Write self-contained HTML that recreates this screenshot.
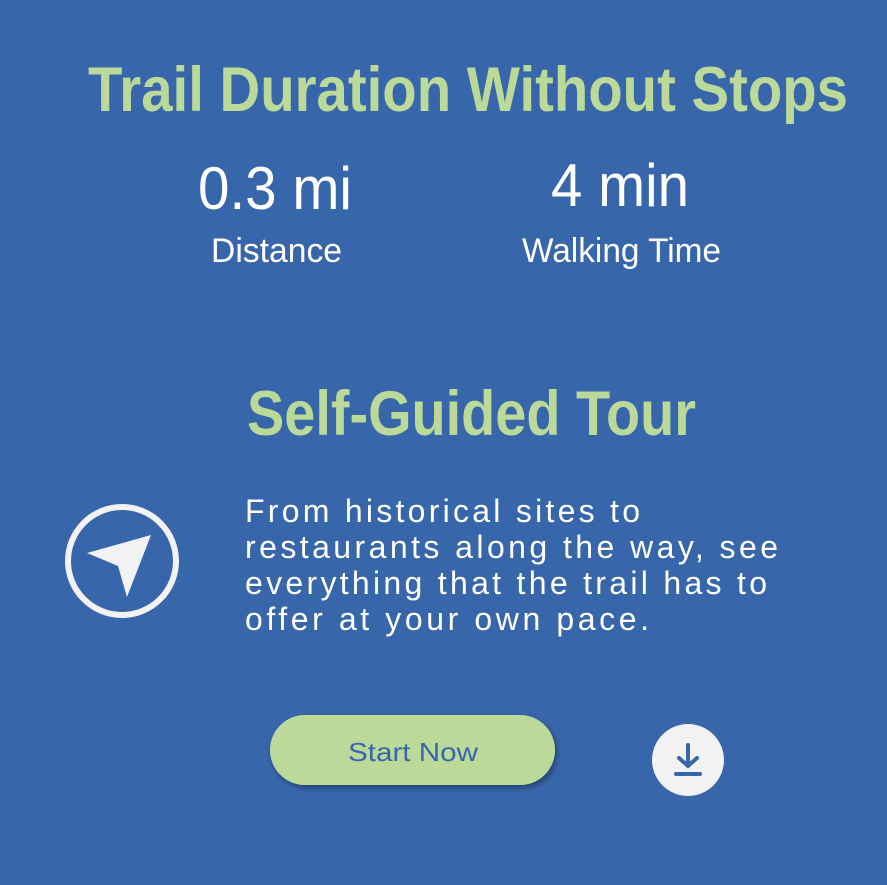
<!DOCTYPE html>
<html><head><meta charset="utf-8"><style>
html,body{margin:0;padding:0;background:#3766AA;}
svg{display:block}
</style></head><body>
<svg width="887" height="885" viewBox="0 0 887 885" xmlns="http://www.w3.org/2000/svg">
<defs>
<filter id="sh" x="-20%" y="-30%" width="140%" height="170%"><feDropShadow dx="2" dy="3" stdDeviation="3" flood-color="#000" flood-opacity="0.35"/></filter>
</defs>
<rect width="887" height="885" fill="#3766AA"/>
<g font-family="Liberation Sans, sans-serif">
<text x="88" y="111" font-size="63" font-weight="bold" fill="#BBDA9A" textLength="760" lengthAdjust="spacingAndGlyphs">Trail Duration Without Stops</text>
<text x="198" y="209" font-size="60" fill="#fff" textLength="154" lengthAdjust="spacingAndGlyphs">0.3 mi</text>
<text x="551" y="206" font-size="60" fill="#fff" textLength="138" lengthAdjust="spacingAndGlyphs">4 min</text>
<text x="211" y="262" font-size="34" fill="#fff" textLength="131" lengthAdjust="spacingAndGlyphs">Distance</text>
<text x="522" y="262" font-size="34" fill="#fff" textLength="199" lengthAdjust="spacingAndGlyphs">Walking Time</text>
<text x="247" y="435" font-size="63" font-weight="bold" fill="#BBDA9A" textLength="449" lengthAdjust="spacingAndGlyphs">Self-Guided Tour</text>
<g font-size="32" fill="#fff">
<text x="245" y="522" textLength="395" lengthAdjust="spacing">From historical sites to</text>
<text x="245" y="558" textLength="533" lengthAdjust="spacing">restaurants along the way, see</text>
<text x="245" y="594" textLength="522" lengthAdjust="spacing">everything that the trail has to</text>
<text x="245" y="630" textLength="404" lengthAdjust="spacing">offer at your own pace.</text>
</g>
<circle cx="122" cy="561" r="54" fill="none" stroke="#F2F2F2" stroke-width="6"/>
<path d="M87 553 L151 535 L127 597 L118 566 Z" fill="#F2F2F2"/>
<rect x="270" y="715" width="285" height="70" rx="35" fill="#BBDA9A" filter="url(#sh)"/>
<text x="348" y="761" font-size="26" fill="#3766AA" textLength="130" lengthAdjust="spacingAndGlyphs">Start Now</text>
<circle cx="688" cy="760" r="36" fill="#F2F2F2"/>
<g stroke="#3766AA" stroke-width="4" stroke-linecap="round" fill="none">
<path d="M688 745 V765"/><path d="M679 758 L688 766 L697 758"/><path d="M676 774 H700"/>
</g>
</g>
</svg>
</body></html>
